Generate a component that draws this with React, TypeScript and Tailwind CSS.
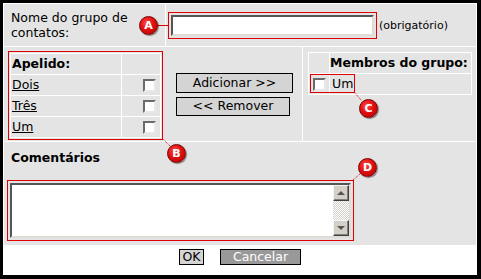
import type { ReactNode } from 'react';

function Checkbox() {
  return (
    <div className="h-[13px] w-[13px] border-2 border-t-[#6b6b6b] border-l-[#6b6b6b] border-r-[#e8e8e8] border-b-[#e8e8e8] bg-white" />
  );
}

function Badge({ letter, className }: { letter: string; className: string }) {
  return (
    <div
      className={`absolute flex h-[19px] w-[19px] items-center justify-center rounded-full border border-[#7a0000] bg-[radial-gradient(circle_at_40%_35%,#ff4a4a_0%,#e01010_45%,#b00000_100%)] text-[11px] font-bold leading-none text-white shadow-[1px_1px_1px_rgba(0,0,0,0.45)] ${className}`}
    >
      {letter}
    </div>
  );
}

function ScrollButton({ children }: { children: ReactNode }) {
  return (
    <div className="flex h-[16px] w-[16px] items-center justify-center border border-t-[#f4f4f4] border-l-[#f4f4f4] border-r-[#404040] border-b-[#404040] bg-[#d4d0c8] shadow-[inset_-1px_-1px_0_#808080]">
      {children}
    </div>
  );
}

export default function App() {
  return (
    <div className="relative flex h-[279px] w-[481px] flex-col border-t-[3px] border-l-[3px] border-r-4 border-b-4 border-black bg-white pt-px px-px font-['DejaVu_Sans',sans-serif] text-[12.5px] text-black">
      <div className="flex flex-col gap-px">
        {/* nome do grupo */}
        <div className="flex h-[42px] gap-px">
          <div className="flex w-[161px] items-center bg-[#e4e4e4] pl-[7px] leading-[15px]">
            <span>
              Nome do grupo de
              <br />
              contatos:
            </span>
          </div>
          <div className="flex flex-1 items-center bg-[#e4e4e4] pl-[2px]">
            <div className="h-[27px] w-[209px] border border-[#e00000] p-[2px]">
              <div className="h-full w-full border-2 border-t-[#555] border-l-[#555] border-r-[#e0ddd6] border-b-[#e0ddd6] bg-white" />
            </div>
            <span className="ml-[2px] mt-[3px] text-[11px]">(obrigatório)</span>
          </div>
        </div>

        {/* apelidos / membros */}
        <div className="flex h-[94px] gap-px">
          <div className="flex w-[298px] items-start bg-[#e4e4e4] pl-[4px] pt-[4px]">
            <div className="border border-[#e00000] p-px">
              <div className="grid grid-cols-[110px_38px] gap-px bg-white p-px">
                <div className="flex h-[20px] items-center bg-[#e4e4e4] pl-px font-bold">Apelido:</div>
                <div className="bg-[#e4e4e4]" />
                {['Dois', 'Três', 'Um'].map((name) => (
                  <div key={name} className="contents">
                    <div className="flex h-[20px] items-center bg-[#e4e4e4] pl-px">
                      <span className="underline">{name}</span>
                    </div>
                    <div className="flex items-center justify-end bg-[#e4e4e4] pr-[4px]">
                      <Checkbox />
                    </div>
                  </div>
                ))}
              </div>
            </div>

            <div className="ml-[13px] mt-[22px] flex flex-col gap-[4px]">
              <div className="flex h-[20px] w-[117px] items-center justify-center border border-black bg-[#d4d4d4]">
                Adicionar &gt;&gt;
              </div>
              <div className="flex h-[19px] w-[114px] items-center justify-center border border-black bg-[#d4d4d4]">
                &lt;&lt; Remover
              </div>
            </div>
          </div>

          <div className="relative flex-1 bg-[#e4e4e4] pl-[5px] pt-[5px]">
            <div className="grid w-[164px] grid-cols-[20px_141px] gap-px bg-white p-px">
              <div className="h-[20px] bg-[#e4e4e4]" />
              <div className="flex items-center whitespace-nowrap bg-[#e4e4e4] font-bold">Membros do grupo:</div>
              <div className="flex h-[20px] items-center bg-[#e4e4e4] pl-[4px]">
                <Checkbox />
              </div>
              <div className="flex items-center bg-[#e4e4e4] pl-[2px]">Um</div>
            </div>
            <div className="absolute left-[7px] top-[27px] h-[19px] w-[45px] border border-[#e00000]" />
          </div>
        </div>

        {/* comentários */}
        <div className="flex h-[103px] flex-col bg-[#e4e4e4]">
          <div className="pl-[7px] pt-[8px] font-bold leading-[15px]">Comentários</div>
          <div className="ml-[3px] mt-[15px] h-[61px] w-[347px] border border-[#e00000] p-[2px]">
            <div className="flex h-full w-full justify-end border-2 border-t-[#555] border-l-[#555] border-r-[#e0ddd6] border-b-[#e0ddd6] bg-white">
              <div className="flex w-[16px] flex-col">
                <ScrollButton>
                  <div className="h-0 w-0 border-x-[4px] border-b-[4px] border-x-transparent border-b-[#555]" />
                </ScrollButton>
                <div className="flex-1 bg-[repeating-conic-gradient(#d4d0c8_0%_25%,#ffffff_0%_50%)] [background-size:2px_2px]" />
                <ScrollButton>
                  <div className="h-0 w-0 border-x-[4px] border-t-[4px] border-x-transparent border-t-[#555]" />
                </ScrollButton>
              </div>
            </div>
          </div>
        </div>
      </div>

      {/* rodapé */}
      <div className="flex h-[30px] justify-center gap-[16px] pt-[4px]">
        <div className="flex h-[16px] w-[25px] items-center justify-center border border-black bg-[#d4d4d4] leading-none">
          OK
        </div>
        <div className="flex h-[16px] w-[81px] items-center justify-center border border-black bg-[#999999] leading-none text-white">
          Cancelar
        </div>
      </div>

      {/* anotações */}
      <div className="pointer-events-none absolute -left-[3px] -top-[3px] h-[279px] w-[481px]">
        <svg className="absolute inset-0" width="481" height="279">
          <line x1="157" y1="25.5" x2="168" y2="25.5" stroke="#e00000" strokeWidth="1" />
          <line x1="162" y1="138" x2="171" y2="147" stroke="#e00000" strokeWidth="1" strokeDasharray="1 1" />
          <line x1="354" y1="92" x2="362" y2="101" stroke="#e00000" strokeWidth="1" strokeDasharray="1 1" />
          <line x1="353" y1="180" x2="361" y2="173" stroke="#e00000" strokeWidth="1" strokeDasharray="1 1" />
        </svg>
        <Badge letter="A" className="left-[139px] top-[16px]" />
        <Badge letter="B" className="left-[167px] top-[144px]" />
        <Badge letter="C" className="left-[359px] top-[99px]" />
        <Badge letter="D" className="left-[358px] top-[158px]" />
      </div>
    </div>
  );
}
